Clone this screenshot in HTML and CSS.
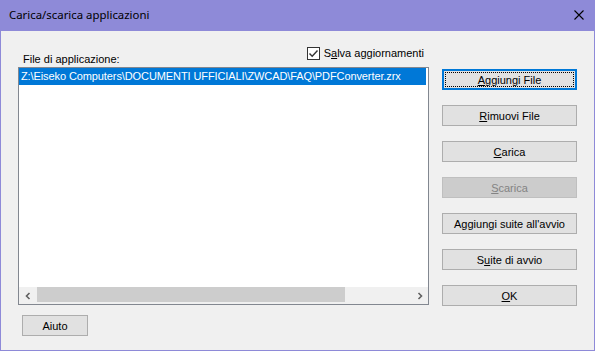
FILE: index.html
```html
<!DOCTYPE html>
<html lang="it">
<head>
    <meta charset="UTF-8">
    <title>Carica/scarica applicazioni</title>
    <link rel="stylesheet" href="styles.css">
</head>
<body>
    <div class="window">
        <div class="titlebar">
            <span class="title">Carica/scarica applicazioni</span>
            <span class="close">
                <svg width="10" height="10" viewBox="0 0 10 10"><path d="M0.5 0.5 L9.5 9.5 M9.5 0.5 L0.5 9.5" stroke="#000" stroke-width="1.1"/></svg>
            </span>
        </div>
        <div class="client">
            <div class="left">
                <div class="list-head">
                    <span class="label">File di applicazione:</span>
                    <label class="check">
                        <span class="box">
                            <svg width="11" height="11" viewBox="0 0 11 11"><path d="M1.5 5.5 L4.2 8.3 L9.5 2.5" fill="none" stroke="#333" stroke-width="1.4"/></svg>
                        </span>
                        <span>S<u>a</u>lva aggiornamenti</span>
                    </label>
                </div>
                <div class="listbox">
                    <div class="rows">
                        <div class="row selected">Z:\Eiseko Computers\DOCUMENTI UFFICIALI\ZWCAD\FAQ\PDFConverter.zrx</div>
                    </div>
                    <div class="hscroll">
                        <span class="arrow">
                            <svg width="8" height="8" viewBox="0 0 8 8"><path d="M5.5 1 L2.5 4 L5.5 7" fill="none" stroke="#606060" stroke-width="1.6"/></svg>
                        </span>
                        <div class="track"><div class="thumb"></div></div>
                        <span class="arrow">
                            <svg width="8" height="8" viewBox="0 0 8 8"><path d="M2.5 1 L5.5 4 L2.5 7" fill="none" stroke="#606060" stroke-width="1.6"/></svg>
                        </span>
                    </div>
                </div>
                <button class="btn help">Aiuto</button>
            </div>
            <div class="buttons">
                <button class="btn default"><span class="focus"><u>A</u>ggiungi File</span></button>
                <button class="btn"><u>R</u>imuovi File</button>
                <button class="btn"><u>C</u>arica</button>
                <button class="btn" disabled><u>S</u>carica</button>
                <button class="btn">Aggiungi suite all'avvio</button>
                <button class="btn">S<u>u</u>ite di avvio</button>
                <button class="btn"><u>O</u>K</button>
            </div>
        </div>
    </div>
</body>
</html>
```
FILE: styles.css
```css
body {
    margin: 0;
    padding: 0;
    font-family: 'Liberation Sans', Arial, sans-serif;
    font-size: 11px;
    color: #000;
}

.window {
    width: 595px;
    height: 351px;
    box-sizing: border-box;
    border: 1px solid #8e8ad8;
    border-top: none;
    background-color: #f0f0f0;
    display: flex;
    flex-direction: column;
}

.titlebar {
    height: 31px;
    margin: 0 -1px;
    background-color: #8e8ad8;
    display: flex;
    align-items: center;
    justify-content: space-between;
    padding: 0 11px 0 9px;
}

.title {
    font-family: 'Noto Sans', sans-serif;
    font-size: 11.4px;
    color: #000;
    position: relative;
    top: -1px;
}

.close {
    display: flex;
    position: relative;
    top: -1px;
}

.client {
    flex: 1;
    display: flex;
    padding: 16px 0 0 17px;
}

.left {
    width: 411px;
    display: flex;
    flex-direction: column;
}

.list-head {
    height: 20px;
    display: flex;
    align-items: flex-start;
}

.label {
    margin: 6px 0 0 5px;
    line-height: 13px;
}

.check {
    margin-left: auto;
    margin-right: 5px;
    display: flex;
    align-items: center;
    gap: 4px;
    line-height: 13px;
}

.box {
    width: 11px;
    height: 11px;
    border: 1px solid #333;
    background: #fff;
    display: flex;
}

.listbox {
    height: 238px;
    box-sizing: border-box;
    border: 1px solid #828790;
    background: #fff;
    display: flex;
    flex-direction: column;
}

.rows {
    flex: 1;
}

.row {
    height: 17px;
    line-height: 17px;
    padding-left: 2px;
    white-space: nowrap;
    margin-right: 2px;
    letter-spacing: -0.1px;
}

.row.selected {
    background-color: #0078d7;
    color: #fff;
}

.hscroll {
    height: 17px;
    background: #f0f0f0;
    display: flex;
    align-items: stretch;
}

.arrow {
    width: 17px;
    display: flex;
    align-items: center;
    justify-content: center;
}

.track {
    flex: 1;
    display: flex;
    align-items: flex-start;
}

.thumb {
    width: 308px;
    height: 15px;
    background: #cdcdcd;
    margin-left: 1px;
}

.btn {
    font-family: 'Liberation Sans', Arial, sans-serif;
    font-size: 11px;
    color: #000;
    width: 135px;
    height: 21px;
    padding: 0;
    background: #e1e1e1;
    border: 1px solid #adadad;
    box-sizing: border-box;
    display: flex;
    align-items: center;
    justify-content: center;
}

.btn:disabled {
    background: #cccccc;
    border-color: #bfbfbf;
    color: #838383;
}

.btn.default {
    border: 2px solid #0078d7;
    padding: 1px;
}

.focus {
    flex: 1;
    align-self: stretch;
    display: flex;
    align-items: center;
    justify-content: center;
    border: 1px dotted #000;
}

.help {
    width: 66px;
    margin: 10px 0 0 4px;
}

.buttons {
    margin-left: 13px;
    padding-top: 22px;
    display: flex;
    flex-direction: column;
    gap: 15px;
}
```
